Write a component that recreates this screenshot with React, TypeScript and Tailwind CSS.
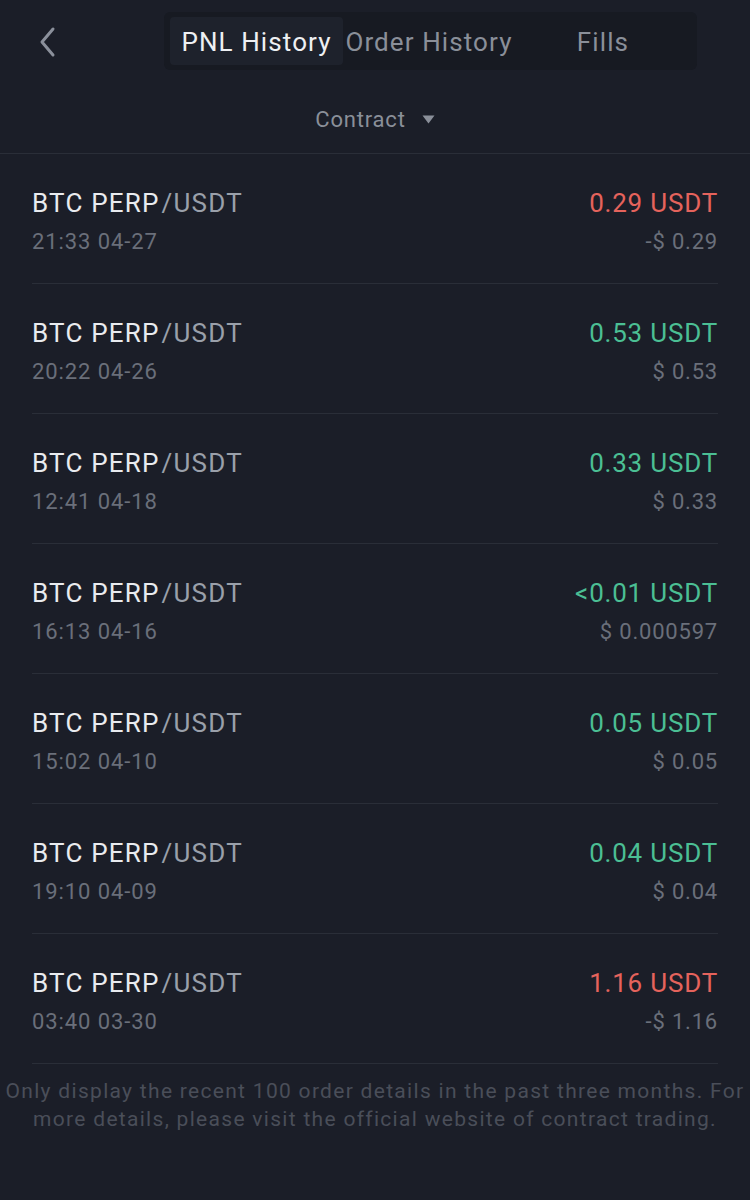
import React from "react";

type Row = { date: string; amt: string; usd: string; up: boolean };

const rows: Row[] = [
  { date: "21:33 04-27", amt: "0.29 USDT", usd: "-$ 0.29", up: false },
  { date: "20:22 04-26", amt: "0.53 USDT", usd: "$ 0.53", up: true },
  { date: "12:41 04-18", amt: "0.33 USDT", usd: "$ 0.33", up: true },
  { date: "16:13 04-16", amt: "<0.01 USDT", usd: "$ 0.000597", up: true },
  { date: "15:02 04-10", amt: "0.05 USDT", usd: "$ 0.05", up: true },
  { date: "19:10 04-09", amt: "0.04 USDT", usd: "$ 0.04", up: true },
  { date: "03:40 03-30", amt: "1.16 USDT", usd: "-$ 1.16", up: false },
];

export default function App() {
  return (
    <div
      className="w-[750px] h-[1200px] bg-[#1b1e28] overflow-hidden"
      style={{ fontFamily: "Roboto, 'Liberation Sans', sans-serif" }}
    >
      {/* header */}
      <div className="h-[82px] flex items-start relative">
        <div className="absolute left-[36px] top-[26px]">
          <svg width="24" height="32" viewBox="0 0 24 32" fill="none">
            <path d="M17 3 L6 16 L17 29" stroke="#8b909b" strokeWidth="3" strokeLinecap="round" strokeLinejoin="round" />
          </svg>
        </div>
        <div className="ml-[164px] mt-[12px] w-[533px] h-[58px] bg-[#171a22] rounded-[6px] flex items-center px-[6px]">
          <div className="w-[173px] h-[48px] shrink-0 rounded-[4px] bg-[#1e222c] flex items-center justify-center pt-[2px] text-[26px] text-[#eef0f3] tracking-[1.1px] whitespace-nowrap">
            PNL History
          </div>
          <div className="w-[172px] h-[48px] shrink-0 flex items-center justify-center pt-[2px] text-[26px] text-[#8a8f99] tracking-[1.1px] whitespace-nowrap">
            Order History
          </div>
          <div className="flex-1 h-[48px] flex items-center justify-center pt-[2px] text-[26px] text-[#8a8f99] tracking-[1.1px]">
            Fills
          </div>
        </div>
      </div>
      {/* filter */}
      <div className="h-[71px] flex items-center justify-center gap-[16px] pt-[4px]">
        <span className="text-[22px] text-[#8a8f99] tracking-[0.8px]">Contract</span>
        <svg width="13" height="9" viewBox="0 0 13 9">
          <path d="M0.5 0.5 H12.5 L6.5 8.5 Z" fill="#8a8f99" />
        </svg>
      </div>
      <div className="h-px bg-[#2a2e38]" />
      {/* list */}
      <div className="px-[32px]">
        {rows.map((r, i) => (
          <div key={i} className="h-[130px] border-b border-[#2a2e38] flex justify-between pt-[33px]">
            <div className="flex flex-col">
              <div className="text-[26px] leading-[32px] tracking-[1.2px] whitespace-nowrap">
                <span className="text-[#e9ebef]">BTC PERP</span>
                <span className="text-[#9aa0aa] ml-[2px]">/USDT</span>
              </div>
              <div className="text-[22px] leading-[26px] mt-[10px] text-[#6a6f7a] tracking-[0.9px]">{r.date}</div>
            </div>
            <div className="flex flex-col items-end">
              <div
                className={`text-[26px] leading-[32px] tracking-[0.8px] ${r.up ? "text-[#4bbf94]" : "text-[#e5635c]"}`}
              >
                {r.amt}
              </div>
              <div className="text-[22px] leading-[26px] mt-[10px] text-[#6a6f7a] tracking-[0.8px]">{r.usd}</div>
            </div>
          </div>
        ))}
      </div>
      <div className="flex justify-center mt-[13px]">
        <p className="w-[760px] shrink-0 text-center text-[21px] leading-[28px] text-[#4a4e59] tracking-[1.3px]">
          Only display the recent 100 order details in the past three months. For more details, please visit the official website of contract trading.
        </p>
      </div>
    </div>
  );
}
